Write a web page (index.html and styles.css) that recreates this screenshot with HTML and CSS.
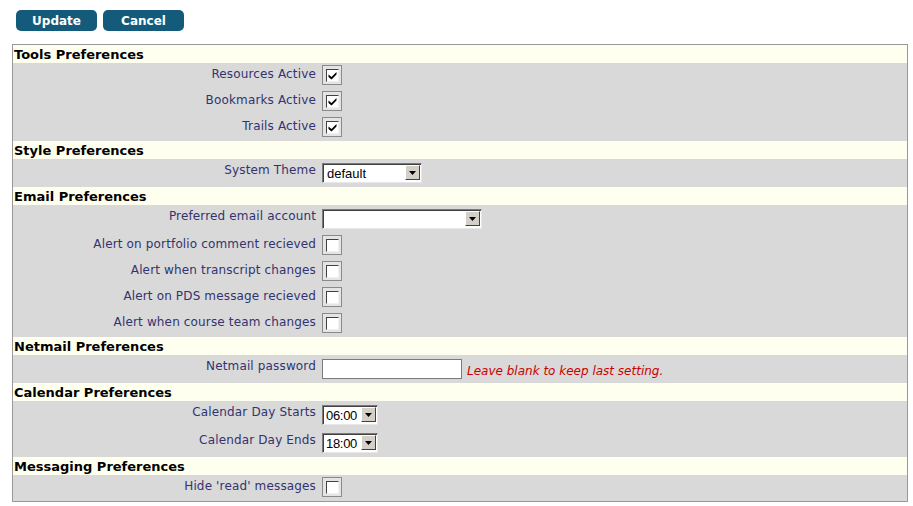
FILE: index.html
```html
<!DOCTYPE html>
<html>
<head>
<meta charset="utf-8">
<link rel="stylesheet" href="styles.css">
</head>
<body>
<div class="page">
  <div class="buttons">
    <span class="btn">Update</span>
    <span class="btn">Cancel</span>
  </div>
  <div class="prefs">
    <div class="head">Tools Preferences</div>
    <div class="row"><div class="lab">Resources Active</div><div class="ctl"><span class="cb on"><span class="box"><svg viewBox="0 0 9 9" width="9" height="9"><path d="M0.5 3.5 L3.5 6 L8.5 1 L8.5 3.5 L3.5 8.5 L0.5 6 Z" fill="#000"/></svg></span></span></div></div>
    <div class="row"><div class="lab">Bookmarks Active</div><div class="ctl"><span class="cb on"><span class="box"><svg viewBox="0 0 9 9" width="9" height="9"><path d="M0.5 3.5 L3.5 6 L8.5 1 L8.5 3.5 L3.5 8.5 L0.5 6 Z" fill="#000"/></svg></span></span></div></div>
    <div class="row"><div class="lab">Trails Active</div><div class="ctl"><span class="cb on"><span class="box"><svg viewBox="0 0 9 9" width="9" height="9"><path d="M0.5 3.5 L3.5 6 L8.5 1 L8.5 3.5 L3.5 8.5 L0.5 6 Z" fill="#000"/></svg></span></span></div></div>
    <div class="head">Style Preferences</div>
    <div class="row tall"><div class="lab">System Theme</div><div class="ctl"><span class="sel w100"><span class="val">default</span><span class="arr"><svg viewBox="0 0 7 4" width="7" height="4"><path d="M0 0 H7 L3.5 4 Z" fill="#000"/></svg></span></span></div></div>
    <div class="head">Email Preferences</div>
    <div class="row tall"><div class="lab">Preferred email account</div><div class="ctl"><span class="sel w160"><span class="val"></span><span class="arr"><svg viewBox="0 0 7 4" width="7" height="4"><path d="M0 0 H7 L3.5 4 Z" fill="#000"/></svg></span></span></div></div>
    <div class="row"><div class="lab">Alert on portfolio comment recieved</div><div class="ctl"><span class="cb"><span class="box"></span></span></div></div>
    <div class="row"><div class="lab">Alert when transcript changes</div><div class="ctl"><span class="cb"><span class="box"></span></span></div></div>
    <div class="row"><div class="lab">Alert on PDS message recieved</div><div class="ctl"><span class="cb"><span class="box"></span></span></div></div>
    <div class="row"><div class="lab">Alert when course team changes</div><div class="ctl"><span class="cb"><span class="box"></span></span></div></div>
    <div class="head">Netmail Preferences</div>
    <div class="row tall"><div class="lab">Netmail password</div><div class="ctl"><span class="txt"></span><span class="note">Leave blank to keep last setting.</span></div></div>
    <div class="head">Calendar Preferences</div>
    <div class="row tall"><div class="lab">Calendar Day Starts</div><div class="ctl"><span class="sel w56"><span class="val time">06:00</span><span class="arr"><svg viewBox="0 0 7 4" width="7" height="4"><path d="M0 0 H7 L3.5 4 Z" fill="#000"/></svg></span></span></div></div>
    <div class="row tall"><div class="lab">Calendar Day Ends</div><div class="ctl"><span class="sel w56"><span class="val time">18:00</span><span class="arr"><svg viewBox="0 0 7 4" width="7" height="4"><path d="M0 0 H7 L3.5 4 Z" fill="#000"/></svg></span></span></div></div>
    <div class="head">Messaging Preferences</div>
    <div class="row"><div class="lab">Hide 'read' messages</div><div class="ctl"><span class="cb"><span class="box"></span></span></div></div>
  </div>
</div>
</body>
</html>
```
FILE: styles.css
```css
html, body {
  margin: 0;
  padding: 0;
  background: #ffffff;
}
.page {
  padding: 10px 5px 0 12px;
  font-family: "DejaVu Sans", Verdana, sans-serif;
  font-size: 12px;
}
.buttons {
  display: flex;
  gap: 6px;
  padding-left: 4px;
  margin-bottom: 13px;
}
.btn {
  display: inline-flex;
  align-items: center;
  justify-content: center;
  width: 81px;
  height: 21px;
  background: #135a7b;
  color: #ffffff;
  font-weight: bold;
  font-size: 12px;
  border-radius: 5px;
}
.prefs {
  width: 894px;
  border: 1px solid #999999;
  background: #fffff0;
  display: flex;
  flex-direction: column;
}
.head {
  height: 18px;
  line-height: 19px;
  padding-left: 1px;
  font-weight: bold;
  font-size: 13px;
  color: #000000;
  background: #fffff0;
}
.row {
  display: flex;
  height: 26px;
  background: #d9d9d9;
}
.row.tall {
  height: 28px;
}
.lab {
  width: 303px;
  text-align: right;
  color: #333370;
  padding-top: 4px;
  padding-right: 6px;
  letter-spacing: 0.15px;
  white-space: nowrap;
}
.ctl {
  display: flex;
  align-items: flex-start;
  padding-top: 2px;
}
.cb {
  width: 18px;
  height: 18px;
  border: 1px solid #8a8a8a;
  background: #e4e4e4;
  display: flex;
  align-items: center;
  justify-content: center;
}
.box {
  width: 11px;
  height: 11px;
  border-top: 1px solid #404040;
  border-left: 1px solid #404040;
  border-bottom: 1px solid #f0f0f0;
  border-right: 1px solid #f0f0f0;
  background: #ffffff;
  display: flex;
  align-items: center;
  justify-content: center;
}
.sel {
  display: flex;
  height: 18px;
  margin-top: 2px;
  border-top: 1px solid #7a7a7a;
  border-left: 1px solid #7a7a7a;
  border-bottom: 1px solid #e8e8e8;
  border-right: 1px solid #e8e8e8;
  background: #ffffff;
  box-shadow: inset 1px 1px 0 #404040;
}
.w100 { width: 98px; }
.w160 { width: 158px; }
.w56 { width: 54px; }
.val {
  flex: 1;
  font-family: "Liberation Sans", Arial, sans-serif;
  font-size: 13px;
  line-height: 19px;
  padding-left: 4px;
  color: #000000;
}
.val.time {
  padding-left: 3px;
  font-size: 13px;
  letter-spacing: -0.3px;
}
.arr {
  width: 15px;
  height: 15px;
  margin: 1px 1px 0 0;
  background: #d4d0c8;
  border-top: 1px solid #ffffff;
  border-left: 1px solid #ffffff;
  border-bottom: 1px solid #404040;
  border-right: 1px solid #404040;
  box-sizing: border-box;
  display: flex;
  align-items: center;
  justify-content: center;
}
.txt {
  width: 138px;
  height: 18px;
  margin-top: 2px;
  background: #ffffff;
  border: 1px solid #7a7a7a;
}
.note {
  margin-left: 5px;
  margin-top: 7px;
  color: #cc0000;
  font-style: italic;
}
```
